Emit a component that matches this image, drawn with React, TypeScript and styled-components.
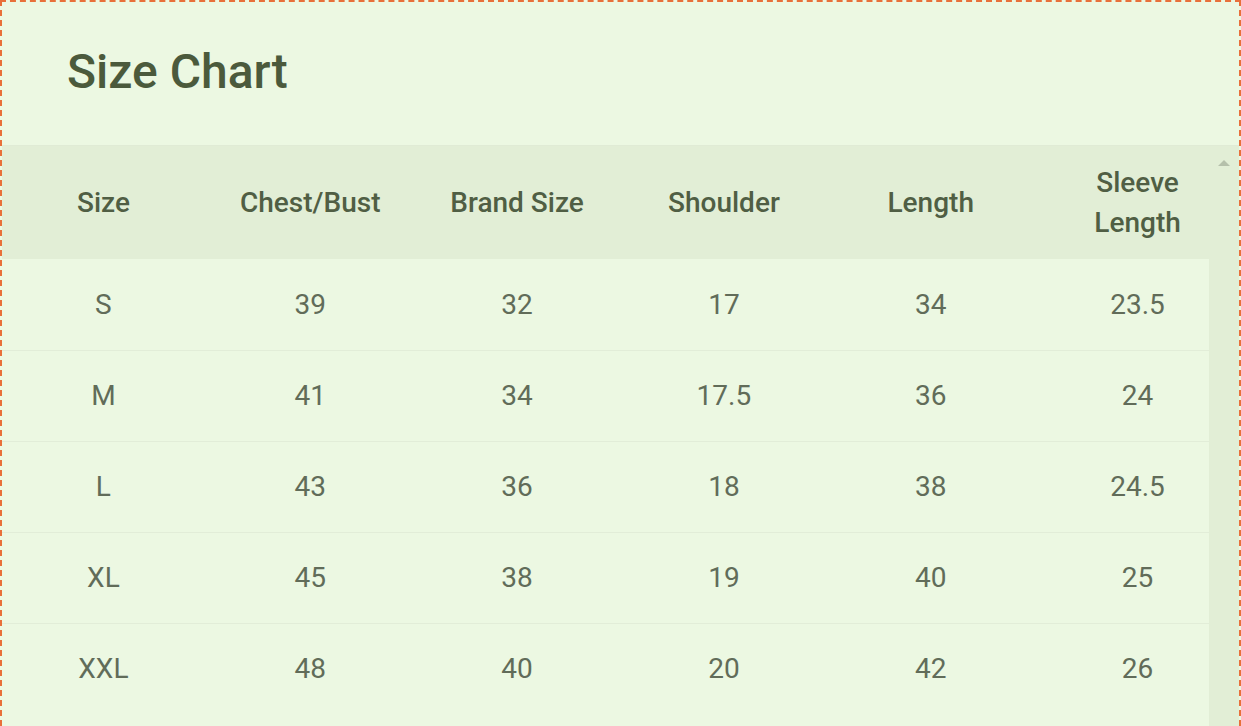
import styled, { createGlobalStyle } from 'styled-components'

const GlobalStyle = createGlobalStyle`
  html, body {
    margin: 0;
    padding: 0;
    overflow: hidden;
    background: #ecf8e2;
    font-family: Roboto, "Liberation Sans", sans-serif;
  }
`

const Card = styled.section`
  width: 1241px;
  box-sizing: border-box;
  border: 2px dashed #e8703a;
  background: #ecf8e2;
`

const TitleBar = styled.header`
  height: 143px;
  display: flex;
  align-items: center;
  padding-left: 65px;
`

const Title = styled.h1`
  margin: 0 0 4px;
  font-size: 48px;
  font-weight: 500;
  color: #4b5a3c;
`

const TableArea = styled.div`
  display: flex;
  border-top: 1px solid #e0ebd5;
`

const Viewport = styled.div`
  flex: 1;
  overflow: hidden;
  padding-bottom: 60px;
`

const Table = styled.table`
  width: 1241px;
  margin-left: -2px;
  table-layout: fixed;
  border-collapse: collapse;
`

const HeadRow = styled.tr`
  height: 113px;
  background: #e2eed6;
`

const Row = styled.tr`
  height: 91px;
  border-bottom: 1px solid #e2edd8;

  &:last-child {
    border-bottom: none;
  }
`

const HeadCell = styled.th`
  padding: 0 28px;
  font-size: 28px;
  line-height: 40px;
  font-weight: 500;
  color: #505e44;
  text-align: center;
`

const Cell = styled.td`
  font-size: 28px;
  font-weight: 400;
  color: #616c59;
  text-align: center;
`

const ScrollTrack = styled.div`
  width: 30px;
  background: #e2eed6;
  display: flex;
  justify-content: center;
  padding-top: 14px;
`

const UpArrow = styled.span`
  width: 0;
  height: 0;
  border-left: 6px solid transparent;
  border-right: 6px solid transparent;
  border-bottom: 6px solid #b5c0ab;
`

const headers = ['Size', 'Chest/Bust', 'Brand Size', 'Shoulder', 'Length', 'Sleeve Length']

const rows = [
  ['S', '39', '32', '17', '34', '23.5'],
  ['M', '41', '34', '17.5', '36', '24'],
  ['L', '43', '36', '18', '38', '24.5'],
  ['XL', '45', '38', '19', '40', '25'],
  ['XXL', '48', '40', '20', '42', '26'],
]

const App = () => {
  return (
    <>
      <GlobalStyle />
      <Card>
        <TitleBar>
          <Title>Size Chart</Title>
        </TitleBar>
        <TableArea>
          <Viewport>
            <Table>
              <thead>
                <HeadRow>
                  {headers.map(h => (
                    <HeadCell key={h}>{h}</HeadCell>
                  ))}
                </HeadRow>
              </thead>
              <tbody>
                {rows.map(r => (
                  <Row key={r[0]}>
                    {r.map((v, j) => (
                      <Cell key={j}>{v}</Cell>
                    ))}
                  </Row>
                ))}
              </tbody>
            </Table>
          </Viewport>
          <ScrollTrack>
            <UpArrow />
          </ScrollTrack>
        </TableArea>
      </Card>
    </>
  )
}

export default App
